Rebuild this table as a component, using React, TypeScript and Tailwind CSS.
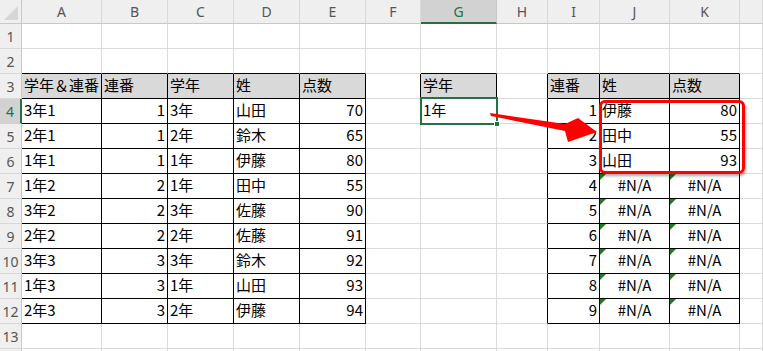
import React from "react";

const letters = ["A", "B", "C", "D", "E", "F", "G", "H", "I", "J", "K", ""];

type Cell = { t: string; right?: boolean; center?: boolean; head?: boolean; err?: boolean };

const cells: Record<string, Cell> = {};

const left = [
  ["3年1", "1", "3年", "山田", "70"],
  ["2年1", "1", "2年", "鈴木", "65"],
  ["1年1", "1", "1年", "伊藤", "80"],
  ["1年2", "2", "1年", "田中", "55"],
  ["3年2", "2", "3年", "佐藤", "90"],
  ["2年2", "2", "2年", "佐藤", "91"],
  ["3年3", "3", "3年", "鈴木", "92"],
  ["1年3", "3", "1年", "山田", "93"],
  ["2年3", "3", "2年", "伊藤", "94"],
];

["学年＆連番", "連番", "学年", "姓", "点数"].forEach((t, i) => {
  cells[`3,${i + 1}`] = { t, head: true };
});
left.forEach((row, r) => {
  row.forEach((t, i) => {
    cells[`${r + 4},${i + 1}`] = { t, right: i === 1 || i === 4 };
  });
});

cells["3,7"] = { t: "学年", head: true };
cells["4,7"] = { t: "1年" };

["連番", "姓", "点数"].forEach((t, i) => {
  cells[`3,${i + 9}`] = { t, head: true };
});
const found = [
  ["伊藤", "80"],
  ["田中", "55"],
  ["山田", "93"],
];
for (let n = 1; n <= 9; n++) {
  const r = n + 3;
  cells[`${r},9`] = { t: String(n), right: true };
  if (n <= 3) {
    cells[`${r},10`] = { t: found[n - 1][0] };
    cells[`${r},11`] = { t: found[n - 1][1], right: true };
  } else {
    cells[`${r},10`] = { t: "#N/A", center: true, err: true };
    cells[`${r},11`] = { t: "#N/A", center: true, err: true };
  }
}

function inTable(r: number, c: number) {
  if (r >= 3 && r <= 12 && c >= 1 && c <= 5) return true;
  if (r >= 3 && r <= 4 && c === 7) return true;
  if (r >= 3 && r <= 12 && c >= 9 && c <= 11) return true;
  return false;
}

function GridCell({ r, c }: { r: number; c: number }) {
  const cell = cells[`${r},${c}`];
  const rb = inTable(r, c) || inTable(r, c + 1) ? "border-r-black" : "border-r-[#dadada]";
  const bb = inTable(r, c) || inTable(r + 1, c) ? "border-b-black" : "border-b-[#dadada]";
  const bg = cell?.head ? "bg-[#d9d9d9]" : "bg-white";
  const align = cell?.right ? "justify-end pr-[2px]" : cell?.center ? "justify-center" : "justify-start pl-[2px]";
  return (
    <div className={`relative flex items-center border-r border-b ${rb} ${bb} ${bg} ${align} h-[25px] pb-[3px] text-[15px] leading-none text-black whitespace-nowrap overflow-hidden`}>
      {cell?.err && (
        <span className="absolute left-0 top-0 w-0 h-0 border-t-[6px] border-r-[6px] border-t-[#1e7d22] border-r-transparent" />
      )}
      {cell?.t}
    </div>
  );
}

export default function App() {
  const rows = Array.from({ length: 14 }, (_, i) => i + 1);
  return (
    <div className="relative w-[763px] h-[351px] overflow-hidden bg-white font-['Noto_Sans_CJK_JP','Noto_Sans',sans-serif]">
      <div className="grid grid-cols-[22px_80px_66px_66px_66px_66px_55px_76px_51px_52px_70px_70px_1fr]">
        {/* column headers */}
        <div className="flex items-end justify-end pr-[3px] pb-[3px] h-[24px] bg-[#efefef] border-r border-b border-[#c8c8c8]">
          <div className="w-[14px] h-[14px] bg-[#d6d6d6] [clip-path:polygon(100%_0,100%_100%,0_100%)]" />
        </div>
        {letters.map((l, i) =>
          i === 6 ? (
            <div key={i} className="flex items-center justify-center h-[24px] bg-[#d2d2d2] border-r border-[#c8c8c8] border-b-2 border-b-[#217346] text-[14px] text-[#217346] font-['Noto_Sans',sans-serif]">
              {l}
            </div>
          ) : (
            <div key={i} className="flex items-center justify-center h-[24px] bg-[#efefef] border-r border-b border-r-[#d8d8d8] border-b-[#c8c8c8] text-[14px] text-[#555] font-['Noto_Sans',sans-serif]">
              {l}
            </div>
          )
        )}

        {rows.map((r) => (
          <React.Fragment key={r}>
            {r === 4 ? (
              <div className="flex items-center justify-center h-[25px] bg-[#d2d2d2] border-r-2 border-r-[#217346] border-b border-b-[#d0d0d0] text-[14px] text-[#217346] font-['Noto_Sans',sans-serif]">
                {r}
              </div>
            ) : (
              <div className="flex items-center justify-center h-[25px] bg-[#efefef] border-r border-b border-r-[#c8c8c8] border-b-[#d8d8d8] text-[14px] text-[#555] font-['Noto_Sans',sans-serif]">
                {r <= 13 ? r : ""}
              </div>
            )}
            {Array.from({ length: 12 }, (_, i) => (
              <GridCell key={i} r={r} c={i + 1} />
            ))}
          </React.Fragment>
        ))}
      </div>

      {/* active cell G4 */}
      <div className="absolute left-[420px] top-[97px] w-[78px] h-[28px] border-2 border-[#217346]" />
      <div className="absolute left-[494px] top-[121px] w-[6px] h-[6px] bg-[#217346] border border-white" />

      {/* red highlight */}
      <div className="absolute left-[599px] top-[100px] w-[146px] h-[74px] border-[3px] border-[#ff0000] rounded-[6px] shadow-[1px_2px_3px_rgba(0,0,0,0.35)]" />

      {/* arrow */}
      <svg className="absolute inset-0 pointer-events-none" width="763" height="351" viewBox="0 0 763 351">
        <polygon
          points="490,113 565,124 578,118 597,132 568,142 565,131 491,116"
          fill="#ff0000"
        />
      </svg>
    </div>
  );
}
